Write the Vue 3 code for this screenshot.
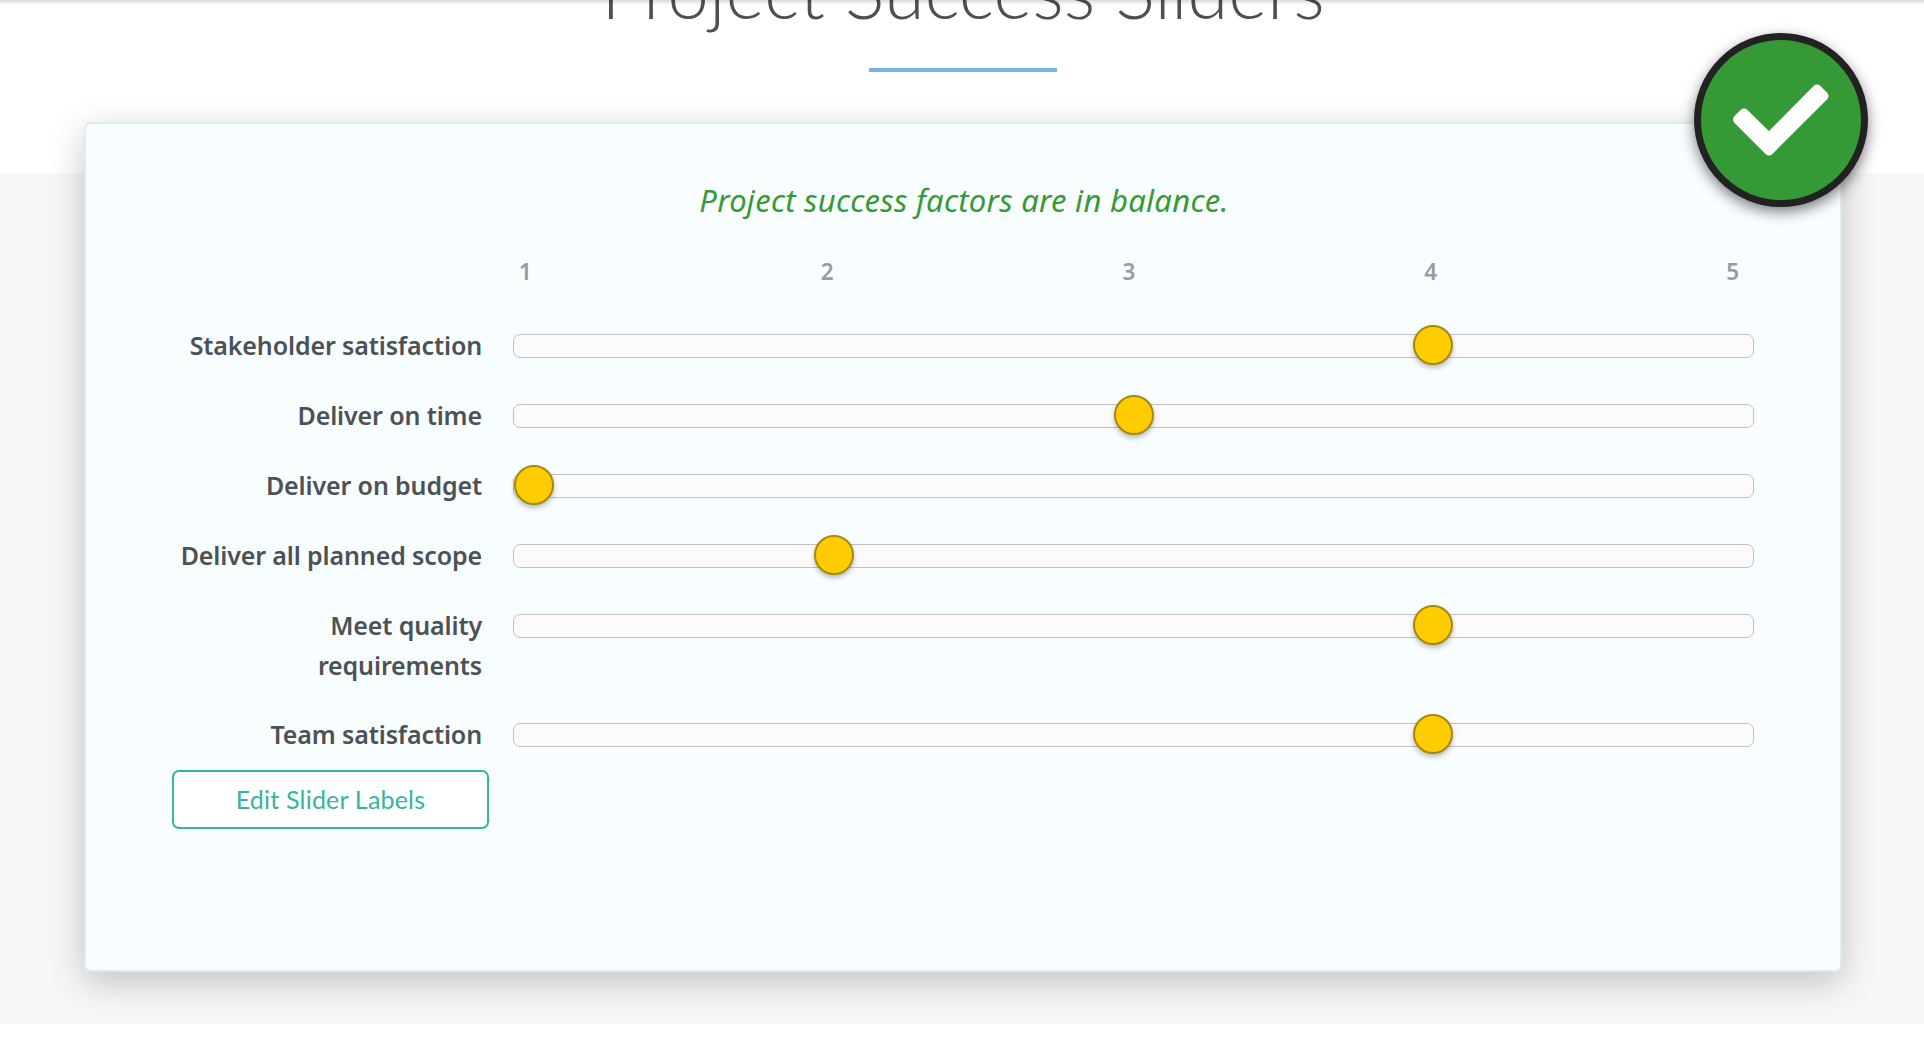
<script setup>
const ticks = [1, 2, 3, 4, 5]
const factors = [
  { label: 'Stakeholder satisfaction', value: 4 },
  { label: 'Deliver on time', value: 3 },
  { label: 'Deliver on budget', value: 1 },
  { label: 'Deliver all planned scope', value: 2 },
  { label: 'Meet quality requirements', value: 4 },
  { label: 'Team satisfaction', value: 4 },
]
// The thumb travels between the track's ends, inset by half its own width.
const thumbLeft = (value) => `calc((100% - 40px) * ${(value - 1) / 4})`
</script>

<template>
  <main class="page">
    <header class="head">
      <h1 class="title"><span>Project Success Sliders</span></h1>
      <div class="rule"></div>
    </header>
    <section class="band">
      <div class="card">
        <p class="status"><span>Project success factors are in balance.</span></p>
        <div class="scale">
          <span v-for="n in ticks" :key="n">{{ n }}</span>
        </div>
        <div v-for="f in factors" :key="f.label" class="row">
          <div class="label">{{ f.label }}</div>
          <div class="track">
            <div class="thumb" :style="{ left: thumbLeft(f.value) }"></div>
          </div>
        </div>
        <button class="edit" type="button">Edit Slider Labels</button>
        <div class="badge">
          <svg viewBox="0 0 174 174" width="174" height="174">
            <path d="M43.500 86.500 L50 80 L75 104.500 L123 56 L130 63 L75 118 Z" />
          </svg>
        </div>
      </div>
    </section>
  </main>
</template>

<style>
body {
  background: #fff;
  overflow: hidden;
}
</style>

<style scoped>
.page {
  height: 1058px;
  overflow: hidden;
  position: relative;
  font-family: "Noto Sans", "Open Sans", sans-serif;
  color: #4d5156;
}
.page::before {
  content: "";
  position: absolute;
  z-index: 2;
  left: 0;
  right: 0;
  top: 0;
  height: 5px;
  background: linear-gradient(rgba(0, 0, 0, 0.15), rgba(0, 0, 0, 0));
}
.head {
  height: 173px;
  padding-left: 2px;
  display: flex;
  flex-direction: column;
  align-items: center;
}
.title {
  margin: -62px 0 0;
  height: 130px;
  line-height: 105px;
  font-family: Lato, sans-serif;
  font-size: 74px;
  font-weight: 300;
  letter-spacing: 0.14px;
  white-space: nowrap;
  color: #4d4f53;
}
.rule {
  width: 188px;
  height: 4px;
  background: #74b5e2;
}
.band {
  height: 850.5px;
  background: #f7f7f7;
}
.card {
  position: relative;
  box-sizing: border-box;
  width: 1758px;
  height: 850px;
  margin: 0 0 0 84px;
  padding: 52px 86px 0 87px;
  top: -51px;
  border: 2px solid #dcecf3;
  border-radius: 7px;
  background: #f8fdff;
  box-shadow: 0 10px 36px rgba(0, 0, 0, 0.22);
}
.status {
  margin: 0;
  height: 54px;
  line-height: 48px;
  text-align: center;
  font-size: 31px;
  font-style: italic;
  letter-spacing: 0.27px;
  text-indent: 1px;
  color: #359a35;
}
.scale {
  display: flex;
  justify-content: space-between;
  height: 80px;
  margin: 0 15px 0 346px;
  line-height: 84px;
  font-size: 22.5px;
  font-weight: 600;
  color: #999c9f;
}
.row {
  display: flex;
  gap: 31px;
  height: 69.95px;
}
.row:nth-child(7) {
  height: 109.2px;
}
.row:nth-child(8) {
  height: 71px;
}
.label {
  width: 309px;
  margin-top: 15px;
  line-height: 40px;
  text-align: right;
  font-size: 25px;
  font-weight: 600;
  letter-spacing: -0.13px;
}
.track {
  position: relative;
  box-sizing: border-box;
  flex: 1;
  height: 24px;
  margin-top: 24px;
  border: 1px solid #bfc1c5;
  border-radius: 7px;
  background: #fcfafa;
}
.thumb {
  position: absolute;
  box-sizing: border-box;
  top: -10px;
  width: 40px;
  height: 40px;
  border: 2px solid #a58a0c;
  border-radius: 50%;
  background: #ffcc02;
  box-shadow: 0 3px 5px rgba(0, 0, 0, 0.25);
}
.edit {
  display: block;
  box-sizing: border-box;
  width: 317px;
  height: 59px;
  margin-left: -1px;
  padding: 0;
  border: 2px solid #35b5a0;
  border-radius: 7px;
  background: #fff;
  color: #35b5a0;
  font-family: Lato, sans-serif;
  font-size: 25px;
  font-weight: 400;
  letter-spacing: 0.2px;
}
.badge {
  position: absolute;
  box-sizing: border-box;
  top: -91px;
  left: 1608px;
  width: 174px;
  height: 174px;
  border: 7px solid #222;
  border-radius: 50%;
  background: #359a35;
  box-shadow: 0 5px 14px rgba(0, 0, 0, 0.5);
}
.badge svg {
  display: block;
  margin: -7px;
}
.badge path {
  fill: #fff;
  stroke: #fff;
  stroke-width: 9;
  stroke-linejoin: round;
}
</style>
